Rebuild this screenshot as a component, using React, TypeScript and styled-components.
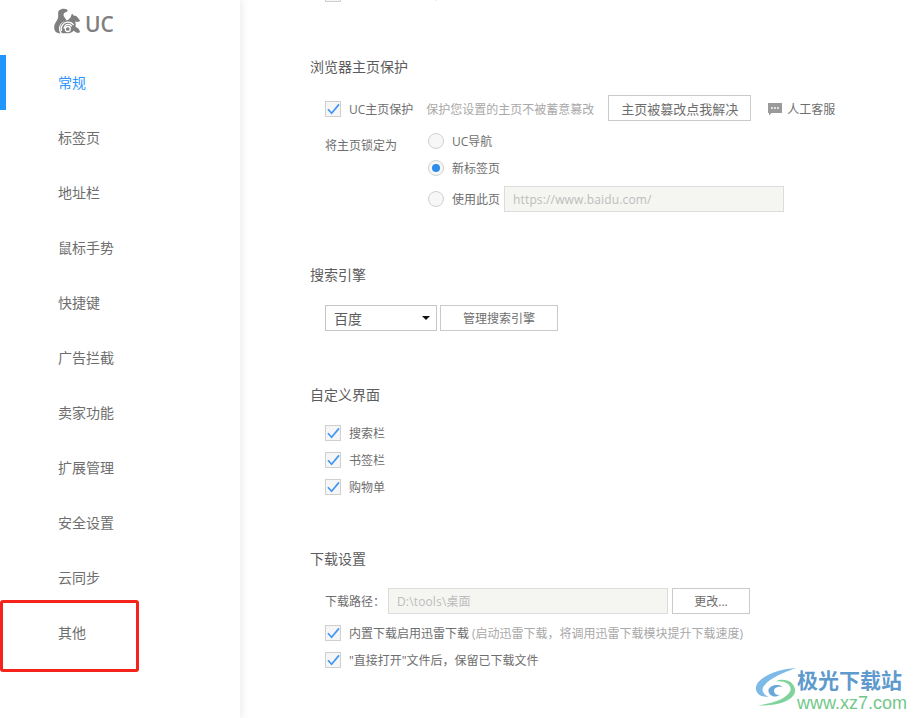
import React from "react";
import styled, { createGlobalStyle } from "styled-components";

const FONT = `"Open Sans", "Noto Sans CJK SC", sans-serif`;

const GlobalStyle = createGlobalStyle`
  html, body {
    margin: 0;
    padding: 0;
    height: 100%;
    overflow: hidden;
    background: #fff;
    font-family: ${FONT};
  }
`;

const Page = styled.div`
  position: relative;
  display: flex;
  width: 913px;
  height: 718px;
  overflow: hidden;
`;

const Sidebar = styled.aside`
  width: 240px;
  flex: none;
  box-shadow: 2px 0 8px rgba(0, 0, 0, 0.08);
`;

const LogoRow = styled.div`
  height: 55px;
  padding: 8px 0 0 54px;
  box-sizing: border-box;
`;

const NavItem = styled.div<{ $active?: boolean }>`
  height: 55px;
  box-sizing: border-box;
  padding: 0 0 2px 52px;
  display: flex;
  align-items: center;
  font-size: 14px;
  color: ${(p) => (p.$active ? "#2d95ff" : "#6e6e6e")};
  border-left: 6px solid ${(p) => (p.$active ? "#2196ff" : "transparent")};
`;

const Main = styled.main`
  flex: 1;
  padding: 0 0 0 70px;
  margin-top: -14px;
`;

const Section = styled.section<{ $top: number }>`
  margin-top: ${(p) => p.$top}px;
`;

const Heading = styled.h3`
  margin: 0;
  height: 20px;
  line-height: 20px;
  font-size: 14px;
  font-weight: 400;
  color: #5c5c5c;
`;

const Body = styled.div<{ $top?: number }>`
  padding-left: 15px;
  margin-top: ${(p) => p.$top ?? 0}px;
`;

const Row = styled.div<{ $h?: number; $top?: number }>`
  display: flex;
  align-items: center;
  height: ${(p) => p.$h ?? 16}px;
  margin-top: ${(p) => p.$top ?? 0}px;
  font-size: 12px;
  color: #6e6e6e;
  white-space: nowrap;
`;

const CheckBox = styled.span`
  width: 16px;
  height: 16px;
  box-sizing: border-box;
  border: 1px solid #cfcfcf;
  background: #f6f6f6;
  margin-right: 8px;
  flex: none;
  display: flex;
  align-items: center;
  justify-content: center;
`;

const Hint = styled.span<{ $gap?: number }>`
  color: #a8a8a8;
  margin-left: ${(p) => p.$gap ?? 0}px;
`;

const Button = styled.div<{ $w: number; $size?: number; $left?: number }>`
  width: ${(p) => p.$w}px;
  height: 26px;
  box-sizing: border-box;
  border: 1px solid #cacaca;
  background: #fff;
  display: flex;
  align-items: center;
  justify-content: center;
  font-size: ${(p) => p.$size ?? 12}px;
  color: #6e6e6e;
  margin-left: ${(p) => p.$left ?? 0}px;
  flex: none;
`;

const RepairButton = styled(Button)`
  align-self: flex-start;
`;

const Support = styled.span`
  display: flex;
  align-items: center;
  gap: 5px;
  margin-left: 17px;
`;

const LockBlock = styled.div`
  display: flex;
  margin-top: 10px;
`;

const LockLabel = styled.div`
  width: 103px;
  font-size: 12px;
  color: #6e6e6e;
  padding-top: 5px;
  line-height: 16px;
`;

const RadioList = styled.div`
  display: flex;
  flex-direction: column;
`;

const Radio = styled.span<{ $on?: boolean }>`
  width: 16px;
  height: 16px;
  box-sizing: border-box;
  border-radius: 50%;
  border: 1px solid #d0d0d0;
  background: #f7f7f7;
  margin-right: 8px;
  flex: none;
  display: flex;
  align-items: center;
  justify-content: center;
  &::after {
    content: "";
    width: 8px;
    height: 8px;
    border-radius: 50%;
    background: ${(p) => (p.$on ? "#2d8cf0" : "transparent")};
  }
`;

const TextField = styled.div<{ $w: number; $left?: number }>`
  width: ${(p) => p.$w}px;
  height: 26px;
  box-sizing: border-box;
  border: 1px solid #dcdcdc;
  background: #f5f5f2;
  color: #bdbdbd;
  font-size: 12px;
  letter-spacing: 0.15px;
  display: flex;
  align-items: center;
  padding-left: 8px;
  margin-left: ${(p) => p.$left ?? 0}px;
  flex: none;
`;

const SelectBox = styled.div`
  width: 112px;
  height: 26px;
  box-sizing: border-box;
  border: 1px solid #c6c6c6;
  display: flex;
  align-items: center;
  justify-content: space-between;
  padding: 0 6px 0 8px;
  font-size: 14px;
  color: #5c5c5c;
  flex: none;
`;

const Caret = styled.span`
  width: 0;
  height: 0;
  border-left: 4px solid transparent;
  border-right: 4px solid transparent;
  border-top: 4px solid #111;
`;

const PathLabel = styled.span`
  width: 63px;
  flex: none;
`;

const Annotation = styled.div`
  position: absolute;
  left: 0;
  top: 600px;
  width: 139px;
  height: 72px;
  box-sizing: border-box;
  border: 3px solid #f5231b;
  border-radius: 3px;
`;

const Watermark = styled.div`
  position: absolute;
  left: 755px;
  top: 667px;
  display: flex;
  align-items: flex-start;
  opacity: 0.9;
`;

const WatermarkText = styled.div`
  display: flex;
  flex-direction: column;
`;

const WatermarkName = styled.span`
  font-size: 21px;
  line-height: 26px;
  font-weight: 700;
  color: #4d90c8;
`;

const WatermarkUrl = styled.span`
  font-family: "Liberation Sans", sans-serif;
  font-size: 18px;
  line-height: 20px;
  color: #63c27c;
`;

const Check = () => (
  <svg width="13" height="12" viewBox="0 0 13 12" fill="none">
    <path d="M1 6.2 L4.6 10.2 L12 1.4" stroke="#4096f5" strokeWidth="1.7" />
  </svg>
);

const ChatIcon = () => (
  <svg width="14" height="14" viewBox="0 0 14 14">
    <path d="M0 1h14v10H3.5L1 13.5V11H0z" fill="#9a9a9a" />
    <circle cx="4" cy="6" r="0.9" fill="#fff" />
    <circle cx="7" cy="6" r="0.9" fill="#fff" />
    <circle cx="10" cy="6" r="0.9" fill="#fff" />
  </svg>
);

const UcLogo = () => (
  <svg width="66" height="30" viewBox="0 0 66 30">
    <g fill="#7f7f7f">
      <path d="M5 2.5C7 .5 11 0 13 1.6c.8.8.6 2-.4 2.4-2 .4-3.4 1.4-3 3.4.4 2 2.4 3 3 5C9 13 5.4 15.6 5 20c-.2 2 .4 4 1.6 5.4C3 25.6.4 23.4.2 20-.2 15 4 12.6 4.2 8.4 4.3 6 3.6 4 5 2.5z" />
      <path d="M16.5 9.5 18 5.5l1.6 2 2.6.4 2.4 2.6 1.6 2.6-2.6.8-2.6-.4c.8 1.6 1 3.4.4 5l3.4 2.6 1.4 3.2-3 .6-3.6-2.2c-1.4 1.2-3.2 2.4-5.4 2.6H8c-2-2.4-2.4-6-.8-9 1.4-2.6 4-4.2 6.8-4.4z" />
    </g>
    <g fill="none" stroke="#fff" strokeWidth="1.3">
      <path d="M7.6 23c-1.4-4.6 1.4-8.4 5.6-8.8 2.6-.2 5 .8 6.4 2.8" />
      <path d="M10.2 20.6c-.2-2.4 1.6-4.2 3.8-4.2 1.6 0 3 .6 3.8 2" />
      <circle cx="13.8" cy="21" r="2.5" />
    </g>
    <text x="31" y="24" fontFamily="'Open Sans', 'Noto Sans', sans-serif" fontSize="21" fontWeight="600" fill="#7f7f7f">
      UC
    </text>
  </svg>
);

const WatermarkLogo = () => (
  <svg width="42" height="42" viewBox="0 0 44 42" fill="none">
    <path d="M43 0C25 1 3 9 1 20c-1 8 7 11 13 10-6-2-8-8-4-12C16 10 30 5 43 0z" fill="#6fb3e6" />
    <path d="M3 39c15-1 31-7 34-15 2-6-5-11-15-10 8-4 20 0 20 10 0 10-20 17-39 15z" fill="#72cf93" />
    <path d="M14 23c2-5 10-7 15-3-5-1-10 1-9 5 1 3 4 4 6 3-5 4-12 1-12-5z" fill="#5b9fd6" />
  </svg>
);

const navItems = ["常规", "标签页", "地址栏", "鼠标手势", "快捷键", "广告拦截", "卖家功能", "扩展管理", "安全设置", "云同步", "其他"];
const interfaceItems = ["搜索栏", "书签栏", "购物单"];

export default function App() {
  return (
    <Page>
      <GlobalStyle />
      <Sidebar>
        <LogoRow>
          <UcLogo />
        </LogoRow>
        {navItems.map((item, i) => (
          <NavItem key={item} $active={i === 0}>
            {item}
          </NavItem>
        ))}
      </Sidebar>
      <Main>
        <Body>
          <Row>
            <CheckBox>
              <Check />
            </CheckBox>
            启用主页新闻内容区
          </Row>
        </Body>

        <Section $top={55}>
          <Heading>浏览器主页保护</Heading>
          <Body $top={18}>
            <Row $h={28}>
              <CheckBox>
                <Check />
              </CheckBox>
              UC主页保护
              <Hint $gap={13}>保护您设置的主页不被蓄意篡改</Hint>
              <RepairButton $w={143} $size={13} $left={14}>
                主页被篡改点我解决
              </RepairButton>
              <Support>
                <ChatIcon />
                人工客服
              </Support>
            </Row>
            <LockBlock>
              <LockLabel>将主页锁定为</LockLabel>
              <RadioList>
                <Row $h={16}>
                  <Radio />
                  UC导航
                </Row>
                <Row $h={16} $top={11}>
                  <Radio $on />
                  新标签页
                </Row>
                <Row $h={26} $top={10}>
                  <Radio />
                  使用此页
                  <TextField $w={280} $left={4}>
                    https://www.baidu.com/
                  </TextField>
                </Row>
              </RadioList>
            </LockBlock>
          </Body>
        </Section>

        <Section $top={53}>
          <Heading>搜索引擎</Heading>
          <Body $top={20}>
            <Row $h={26}>
              <SelectBox>
                百度
                <Caret />
              </SelectBox>
              <Button $w={118} $left={3}>
                管理搜索引擎
              </Button>
            </Row>
          </Body>
        </Section>

        <Section $top={54}>
          <Heading>自定义界面</Heading>
          <Body $top={20}>
            {interfaceItems.map((item, i) => (
              <Row key={item} $top={i ? 11 : 0}>
                <CheckBox>
                  <Check />
                </CheckBox>
                {item}
              </Row>
            ))}
          </Body>
        </Section>

        <Section $top={54}>
          <Heading>下载设置</Heading>
          <Body $top={19}>
            <Row $h={26}>
              <PathLabel>下载路径：</PathLabel>
              <TextField $w={280}>D:\tools\桌面</TextField>
              <Button $w={78} $left={4}>
                更改...
              </Button>
            </Row>
            <Row $top={11}>
              <CheckBox>
                <Check />
              </CheckBox>
              内置下载启用迅雷下载
              <Hint $gap={3}>(启动迅雷下载，将调用迅雷下载模块提升下载速度)</Hint>
            </Row>
            <Row $top={11}>
              <CheckBox>
                <Check />
              </CheckBox>
              "直接打开"文件后，保留已下载文件
            </Row>
          </Body>
        </Section>
      </Main>
      <Annotation />
      <Watermark>
        <WatermarkLogo />
        <WatermarkText>
          <WatermarkName>极光下载站</WatermarkName>
          <WatermarkUrl>www.xz7.com</WatermarkUrl>
        </WatermarkText>
      </Watermark>
    </Page>
  );
}
